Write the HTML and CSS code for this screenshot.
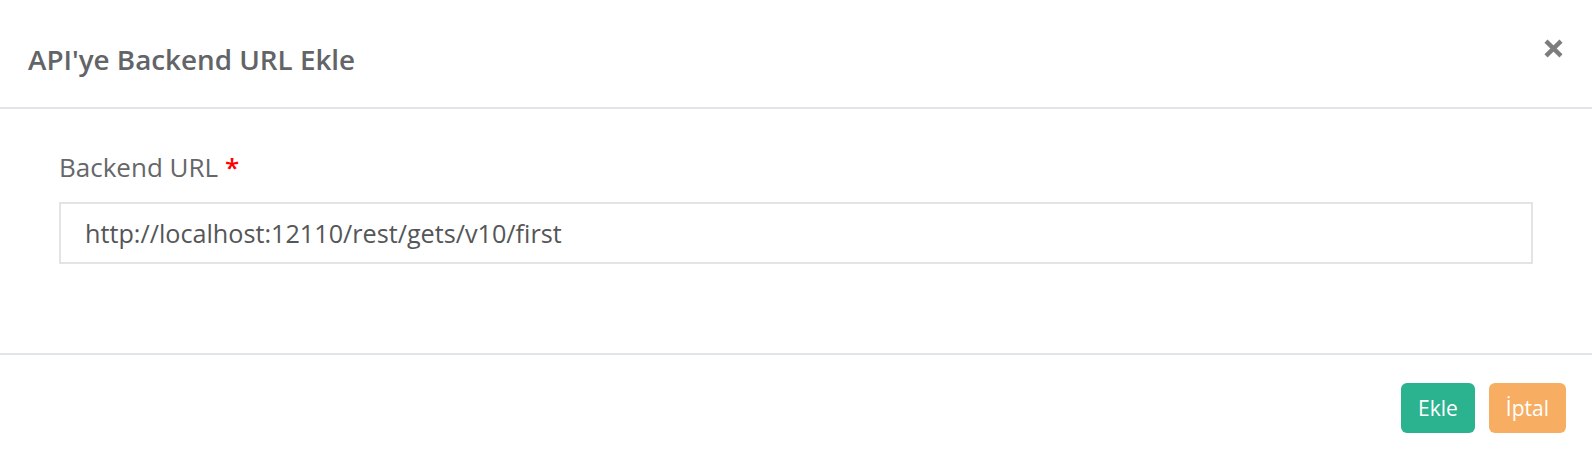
FILE: index.html
```html
<!DOCTYPE html>
<html lang="tr">
<head>
<meta charset="utf-8">
<title>API'ye Backend URL Ekle</title>
<link rel="stylesheet" href="styles.css">
</head>
<body>
<div class="modal">
  <div class="modal-header">
    <h4 class="modal-title">API'ye Backend URL Ekle</h4>
    <button class="close" type="button" aria-label="Kapat">
      <svg width="19" height="19" viewBox="0 0 19 19"><path d="M2 2.2 L17 16.8 M17 2.2 L2 16.8" stroke="#7d7d7d" stroke-width="4.4" stroke-linecap="butt"/></svg>
    </button>
  </div>
  <div class="modal-body">
    <label class="field-label">Backend URL <span class="req">*</span></label>
    <input class="field-input" type="text" value="http://localhost:12110/rest/gets/v10/first">
  </div>
  <div class="modal-footer">
    <button class="btn btn-green" type="button">Ekle</button>
    <button class="btn btn-orange" type="button">İptal</button>
  </div>
</div>
</body>
</html>
```
FILE: styles.css
```css
* { box-sizing: border-box; }
html, body { margin: 0; padding: 0; background: #fff; }
body { font-family: "Open Sans", "Liberation Sans", sans-serif; }
.modal { width: 100%; }
.modal-header {
  display: flex;
  align-items: flex-start;
  justify-content: space-between;
  padding: 40px 29px 29px 28px;
  border-bottom: 2px solid #e2e5e8;
}
.modal-title {
  margin: 0;
  font-size: 27.8px;
  line-height: 38px;
  font-weight: 600;
  color: #626467;
}
.close {
  margin: -1px 0 0 0;
  padding: 0;
  border: 0;
  background: none;
  width: 19px;
  height: 19px;
  display: block;
}
.close svg { display: block; }
.modal-body {
  padding: 41px 59px 89px 59px;
}
.field-label {
  display: block;
  font-size: 26px;
  line-height: 35px;
  color: #666769;
  margin-bottom: 17px;
}
.req { color: #ff0000; font-weight: 600; }
.field-input {
  display: block;
  width: 100%;
  max-width: 1474px;
  height: 62px;
  border: 2px solid #e4e4e4;
  padding: 0 24px;
  font-family: "Open Sans", "Liberation Sans", sans-serif;
  font-size: 25.2px;
  color: #555658;
  background: #fff;
  outline: none;
}
.modal-footer {
  display: flex;
  justify-content: flex-end;
  gap: 14px;
  padding: 28px 26px 23px 26px;
  border-top: 2px solid #e2e5e8;
}
.btn {
  font-family: "Open Sans", "Liberation Sans", sans-serif;
  font-size: 21px;
  line-height: 28px;
  height: 50px;
  padding: 11px 17px;
  border: 0;
  border-radius: 6px;
  color: #fff;
}
.btn-green { background: #2bb390; }
.btn-orange { background: #f8ae62; }
```
